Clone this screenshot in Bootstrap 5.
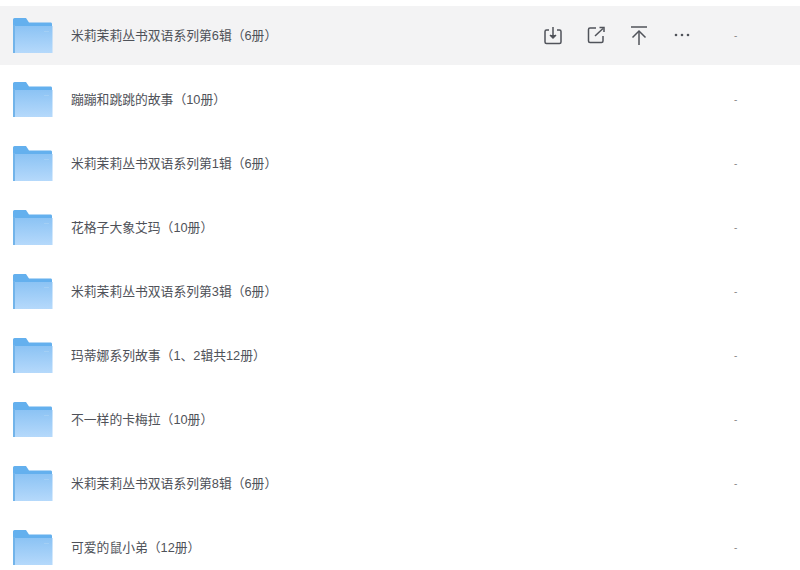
<!DOCTYPE html>
<html lang="zh">
<head>
  <meta charset="UTF-8">
  <title>文件列表</title>
  <link href="https://cdn.jsdelivr.net/npm/bootstrap@5.3.3/dist/css/bootstrap.min.css" rel="stylesheet">
  <style>
    body { background: #fff; overflow: hidden; font-family: "Liberation Sans", "Noto Sans CJK SC", sans-serif; }
    .file-list { padding-top: 6px; }
    .file-row { height: 59px; margin-bottom: 5px; padding-left: 13px; }
    .file-row.active-row { background: #f3f3f4; }
    .folder-icon { width: 40px; height: 37px; flex: none; margin-right: 18px; display: block; }
    .file-name { font-size: 12.8px; color: #4f5259; width: 471px; flex: none; white-space: nowrap; padding-top: 1px; }
    .file-tools { width: 175px; flex: none; gap: 21px; padding-bottom: 2px; }
    .tool-icon { width: 22px; height: 22px; display: block; }
    .file-size { font-size: 10px; color: #888; width: 30px; margin-left: 17px; }
  </style>
</head>
<body>
<svg width="0" height="0" class="position-absolute">
  <defs>
    <linearGradient id="folderGrad" x1="0" y1="0" x2="0" y2="1">
      <stop offset="0" stop-color="#8cc3f4"/>
      <stop offset="1" stop-color="#b5d9fb"/>
    </linearGradient>
    <symbol id="folder" viewBox="0 0 40 37">
      <path d="M0 2.500Q0 1 1.500 1H13L16 5.500H38Q39 5.500 39 7V12H0Z" fill="#64b0ee"/>
      <path d="M0 9H39.500V36H2L0 35Z" fill="url(#folderGrad)"/>
      <path d="M0 8H2V36H0Z" fill="#72b4ea"/>
      <path d="M31 14H36V15H31Z" fill="#a3cff5"/>
    </symbol>
  </defs>
</svg>

<div class="file-list" id="fileList"></div>

<script>
  const files = [
    "米莉茉莉丛书双语系列第6辑（6册）",
    "蹦蹦和跳跳的故事（10册）",
    "米莉茉莉丛书双语系列第1辑（6册）",
    "花格子大象艾玛（10册）",
    "米莉茉莉丛书双语系列第3辑（6册）",
    "玛蒂娜系列故事（1、2辑共12册）",
    "不一样的卡梅拉（10册）",
    "米莉茉莉丛书双语系列第8辑（6册）",
    "可爱的鼠小弟（12册）"
  ];

  const tools = `
    <div class="file-tools d-flex align-items-center">
      <svg class="tool-icon" viewBox="0 0 22 22" fill="none" stroke="#50535a" stroke-width="1.500">
        <path d="M7 6H4.500Q3 6 3 7.500V18Q3 19.500 4.500 19.500H17.500Q19 19.500 19 18V7.500Q19 6 17.500 6H15"/>
        <path d="M11 3V13"/><path d="M8 11L11 14L14 11" fill="#50535a"/>
      </svg>
      <svg class="tool-icon" viewBox="0 0 22 22" fill="none" stroke="#50535a" stroke-width="1.500">
        <path d="M11 4H5Q3.500 4 3.500 5.500V17Q3.500 18.500 5 18.500H16.500Q18 18.500 18 17V12"/>
        <path d="M10 12L18 4.500"/><path d="M14.500 3.500H19V8"/>
      </svg>
      <svg class="tool-icon" viewBox="0 0 22 22" fill="none" stroke="#50535a" stroke-width="1.500">
        <path d="M3 3H19"/><path d="M11 7V21"/><path d="M4.500 13.500L11 7L17.500 13.500"/>
      </svg>
      <svg class="tool-icon" viewBox="0 0 22 22" fill="#50535a">
        <circle cx="5" cy="11" r="1.300"/><circle cx="11" cy="11" r="1.300"/><circle cx="17" cy="11" r="1.300"/>
      </svg>
    </div>`;

  document.getElementById("fileList").innerHTML = files.map((name, i) => `
    <div class="file-row d-flex align-items-center ${i === 0 ? "active-row" : ""}">
      <svg class="folder-icon"><use href="#folder"/></svg>
      <div class="file-name">${name}</div>
      ${i === 0 ? tools : '<div class="file-tools"></div>'}
      <div class="file-size">-</div>
    </div>`).join("");
</script>
<script src="https://cdn.jsdelivr.net/npm/bootstrap@5.3.3/dist/js/bootstrap.bundle.min.js"></script>
</body>
</html>
